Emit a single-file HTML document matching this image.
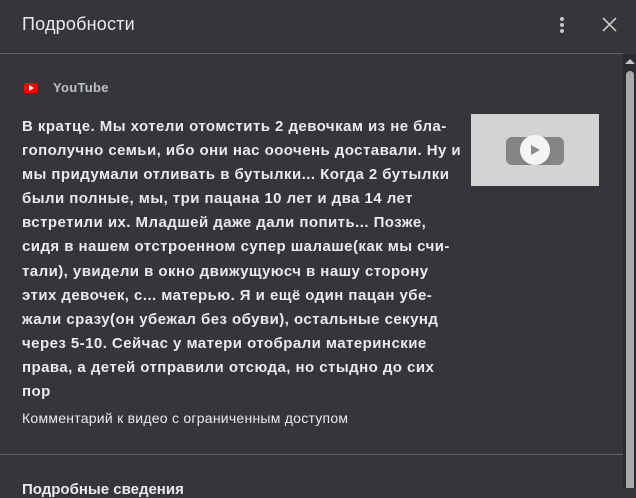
<!DOCTYPE html>
<html><head><meta charset="utf-8"><style>
body{margin:0;width:636px;height:488px;background:#35363a;font-family:"Liberation Sans",sans-serif;overflow:hidden;position:relative;color:#e8eaed}
.hdr{position:absolute;left:22px;top:14px;font-size:18px;color:#e8eaed;letter-spacing:0.2px}
.line{position:absolute;left:0;width:623px;height:1px;background:#5f6368}
.sb{position:absolute;left:623px;top:54px;width:13px;height:434px;background:#2b2c2f}
.thumb{position:absolute;left:626px;top:71px;width:8px;height:417px;background:#a9a9a9;border-radius:4px 4px 0 0}
.txt{position:absolute;left:22px;top:115px;font-size:15px;font-weight:bold;line-height:24.1px;color:#e8eaed;white-space:pre;letter-spacing:0.45px}
</style></head><body>
<div class="hdr">Подробности</div>
<div style="position:absolute;left:560px;top:17px;width:4px">
<div style="width:4px;height:4px;border-radius:2px;background:#c4c7c5;margin-bottom:2px"></div>
<div style="width:4px;height:4px;border-radius:2px;background:#c4c7c5;margin-bottom:2px"></div>
<div style="width:4px;height:4px;border-radius:2px;background:#c4c7c5"></div></div>
<svg style="position:absolute;left:601px;top:16px" width="17" height="17"><path d="M2 2L15 15M15 2L2 15" stroke="#c4c7c5" stroke-width="1.6"/></svg>
<div class="line" style="top:53px"></div>
<div class="sb"></div>
<svg style="position:absolute;left:625px;top:58px" width="10" height="7"><path d="M0 6L5 1L10 6Z" fill="#c4c7c5"/></svg>
<div class="thumb"></div>
<div style="position:absolute;left:24px;top:83px;width:14px;height:10px;background:#f00;border-radius:2px"></div>
<svg style="position:absolute;left:29px;top:85px" width="5" height="6"><path d="M0 0L5 3L0 6Z" fill="#fff"/></svg>
<div style="position:absolute;left:53px;top:80px;font-size:13px;font-weight:bold;color:#bdc1c6;letter-spacing:0.3px">YouTube</div>
<div class="txt">В кратце. Мы хотели отомстить 2 девочкам из не бла-
гополучно семьи, ибо они нас ооочень доставали. Ну и
мы придумали отливать в бутылки... Когда 2 бутылки
были полные, мы, три пацана 10 лет и два 14 лет
встретили их. Младшей даже дали попить... Позже,
сидя в нашем отстроенном супер шалаше(как мы счи-
тали), увидели в окно движущуюсч в нашу сторону
этих девочек, с... матерью. Я и ещё один пацан убе-
жали сразу(он убежал без обуви), остальные секунд
через 5-10. Сейчас у матери отобрали материнские
права, а детей отправили отсюда, но стыдно до сих
пор</div>
<div style="position:absolute;left:471px;top:114px;width:128px;height:72px;background:#d3d3d3"></div>
<div style="position:absolute;left:506px;top:137px;width:58px;height:28px;background:#858585;border-radius:6px"></div>
<div style="position:absolute;left:520px;top:135px;width:30px;height:30px;background:#f5f5f5;border-radius:50%"></div>
<svg style="position:absolute;left:531px;top:145px" width="9" height="10"><path d="M0 0L9 5L0 10Z" fill="#8a8a8a"/></svg>
<div style="position:absolute;left:22px;top:410px;font-size:14px;color:#e8eaed;letter-spacing:0.25px">Комментарий к видео с ограниченным доступом</div>
<div class="line" style="top:454px"></div>
<div style="position:absolute;left:22px;top:481px;font-size:15px;font-weight:bold;color:#e8eaed">Подробные сведения</div>
</body></html>
